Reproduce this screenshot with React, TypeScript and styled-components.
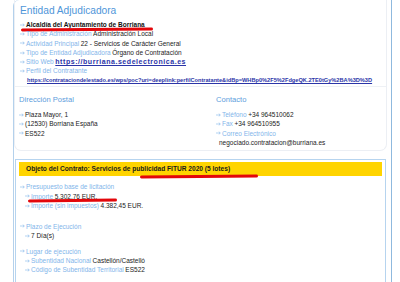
import React from 'react';
import styled, { createGlobalStyle } from 'styled-components';

const GlobalStyle = createGlobalStyle`
  html, body {
    margin: 0;
    padding: 0;
    background: #fff;
  }
  body {
    width: 400px;
    height: 282px;
    overflow: hidden;
    font-family: "Liberation Sans", Arial, sans-serif;
    color: #1b1b1b;
  }
`;

const Frame = styled.div`
  box-sizing: border-box;
  margin-left: 13px;
  width: 379px;
  min-height: 282px;
  border-left: 1px solid #b4d1ec;
  border-right: 1px solid #8fb9de;
  border-top-left-radius: 6px;
`;

const InfoBox = styled.section`
  box-sizing: border-box;
  width: 373px;
  border: 1px solid #eceff4;
  border-top: none;
  border-radius: 0 0 7px 7px;
`;

const Entity = styled.div`
  padding: 4px 0 1px;
  border-bottom: 1px solid #eef1f5;
`;

const Heading = styled.h2`
  margin: 0 0 2px 5px;
  font-size: 10.2px;
  line-height: 14px;
  font-weight: normal;
  color: #4f96d9;
`;

const SubHeading = styled.h3`
  margin: 0 0 5px;
  font-size: 7.6px;
  line-height: 11px;
  font-weight: normal;
  color: #5d9ddc;
`;

const Row = styled.div<{ $indent?: number }>`
  position: relative;
  display: flex;
  align-items: center;
  height: 9.3px;
  padding-left: ${(p) => p.$indent ?? 5}px;
  font-size: 6.5px;
  line-height: 9.3px;
  white-space: nowrap;
`;

const ArrowIcon = styled.svg`
  flex: none;
  width: 5px;
  height: 4px;
  margin-right: 1px;
  color: #93c0ec;
`;

const Label = styled.span`
  color: #82b5ea;
  margin-right: 1.6px;
`;

const Strong = styled.span`
  font-weight: bold;
  color: #111;
`;

const Link = styled.a`
  color: #2b35a8;
  font-weight: bold;
  text-decoration: underline;
`;

const SiteLink = styled(Link)`
  font-size: 7px;
  letter-spacing: 0.55px;
`;

const LongLink = styled(Link)`
  font-size: 5.65px;
`;

const Columns = styled.div`
  display: grid;
  grid-template-columns: 197px 1fr;
  padding: 7px 0 3px 4px;
`;

const Column = styled.div``;

const ContractBox = styled.section`
  box-sizing: border-box;
  width: 371px;
  margin: 8px 0 0 1px;
  padding: 2px 3px 10px;
  border: 1px solid #b6d4ef;
`;

const TitleBar = styled.div`
  position: relative;
  height: 14px;
  padding-left: 7px;
  background: #ffd400;
  font-size: 6.6px;
  line-height: 14px;
  font-weight: bold;
  color: #1a1a1a;
  white-space: nowrap;
`;

const Scribble = styled.span<{ $left: number; $width: number; $top: number }>`
  position: absolute;
  left: ${(p) => p.$left}px;
  top: ${(p) => p.$top}px;
  width: ${(p) => p.$width}px;
  height: 3px;
  border-radius: 2px;
  background: #e3070b;
  transform: rotate(-0.5deg);
`;

const Group = styled.div<{ $gap: number }>`
  margin-bottom: ${(p) => p.$gap}px;
`;

const Details = styled.div`
  padding-top: 6px;
`;

const Arrow = () => (
  <ArrowIcon viewBox="0 0 5 4">
    <path d="M0 2h4.2M2.8 0.7L4.3 2 2.8 3.3" fill="none" stroke="currentColor" strokeWidth="0.7" />
  </ArrowIcon>
);

const Item = ({ label, children, indent }: { label?: string; children?: React.ReactNode; indent?: number }) => (
  <Row $indent={indent}>
    <Arrow />
    {label && <Label>{label}</Label>}
    {children}
  </Row>
);

const App = () => {
  return (
    <>
      <GlobalStyle />
      <Frame>
        <InfoBox>
          <Entity>
            <Heading>Entidad Adjudicadora</Heading>
            <Row>
              <Arrow />
              <Strong>Alcaldía del Ayuntamiento de Borriana</Strong>
              <Scribble $left={6} $width={132} $top={7.5} />
            </Row>
            <Item label="Tipo de Administración">Administración Local</Item>
            <Item label="Actividad Principal">22 - Servicios de Carácter General</Item>
            <Item label="Tipo de Entidad Adjudicadora">Órgano de Contratación</Item>
            <Item label="Sitio Web">
              <SiteLink href="#">https://burriana.sedelectronica.es</SiteLink>
            </Item>
            <Item label="Perfil del Contratante" />
            <Row $indent={12}>
              <LongLink href="#">
                https://contrataciondelestado.es/wps/poc?uri=deeplink:perfilContratante&amp;idBp=WHBp0%2F5%2FdgeQK.2TE0tGy%2BA%3D%3D
              </LongLink>
            </Row>
          </Entity>
          <Columns>
            <Column>
              <SubHeading>Dirección Postal</SubHeading>
              <Item indent={0}>Plaza Mayor, 1</Item>
              <Item indent={0}>(12530) Borriana España</Item>
              <Item indent={0}>ES522</Item>
            </Column>
            <Column>
              <SubHeading>Contacto</SubHeading>
              <Item indent={0} label="Teléfono">+34 964510062</Item>
              <Item indent={0} label="Fax">+34 964510955</Item>
              <Item indent={0} label="Correo Electrónico" />
              <Row $indent={3}>negociado.contratacion@burriana.es</Row>
            </Column>
          </Columns>
        </InfoBox>
        <ContractBox>
          <TitleBar>
            Objeto del Contrato: Servicios de publicidad FITUR 2020 (5 lotes)
            <Scribble $left={121} $width={118} $top={12.5} />
          </TitleBar>
          <Details>
            <Group $gap={11.5}>
              <Item indent={1} label="Presupuesto base de licitación" />
              <Row $indent={6}>
                <Arrow />
                <Label>Importe</Label>5.302,76 EUR.
                <Scribble $left={9} $width={89} $top={7.5} />
              </Row>
              <Item indent={6} label="Importe (sin impuestos)">4.382,45 EUR.</Item>
            </Group>
            <Group $gap={6.4}>
              <Item indent={1} label="Plazo de Ejecución" />
              <Item indent={6}>7 Día(s)</Item>
            </Group>
            <Group $gap={0}>
              <Item indent={1} label="Lugar de ejecución" />
              <Item indent={6} label="Subentidad Nacional">Castellón/Castelló</Item>
              <Item indent={6} label="Código de Subentidad Territorial">ES522</Item>
            </Group>
          </Details>
        </ContractBox>
      </Frame>
    </>
  );
};

export default App;
